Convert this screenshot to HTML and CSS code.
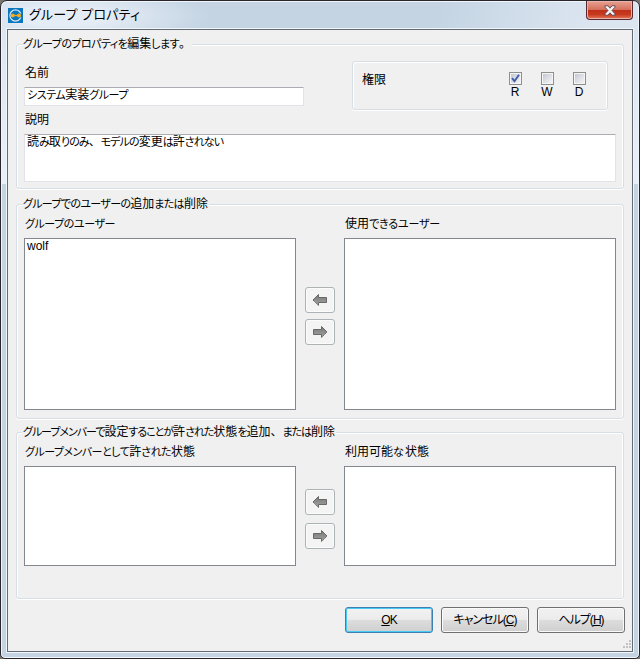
FILE: index.html
```html
<!DOCTYPE html>
<html lang="ja">
<head>
<meta charset="utf-8">
<title>グループ プロパティ</title>
<link rel="stylesheet" href="styles.css">
</head>
<body>
<svg width="0" height="0" class="defs">
  <defs>
    <linearGradient id="arrowFill" x1="0" y1="0" x2="0" y2="1"><stop offset="0" stop-color="#777"/><stop offset="1" stop-color="#a4a4a4"/></linearGradient>
    <symbol id="arrow" viewBox="0 0 16 14"><path d="M1 7 6.500 1.500v3h8v5h-8v3z" fill="url(#arrowFill)" stroke="#686868"/><path d="M1.500 8 6 12.500" stroke="#ddd" stroke-dasharray="1 1" fill="none"/></symbol>
  </defs>
</svg>
<div class="window">
  <header class="titlebar">
    <svg class="app-icon" width="15" height="15" viewBox="0 0 15 15"><rect width="15" height="15" fill="#0875bd"/><circle cx="7.500" cy="7.500" r="5.600" fill="none" stroke="#d6e8f3" stroke-width="1.200"/><rect x="9" y="5.500" width="6" height="4" fill="#0875bd"/><path d="M4 7.500h7" stroke="#f6a61c" stroke-width="1.300"/><circle cx="4.700" cy="7.500" r="1.900" fill="#f9ac18"/><circle cx="11" cy="7.500" r="2" fill="#f9ac18"/></svg>
    <span class="title">グループ プロパティ</span>
    <div class="close"><svg width="12" height="11" viewBox="0 0 12 11"><path d="M1 .8h3L6 3.200 8 .8h3v1.400L8 5.500l3 3.300v1.400H8L6 7.800l-2 2.400H1V8.800l3-3.300-3-3.300z" fill="#f4f4f4" stroke="#5b4350" stroke-width=".9"/></svg></div>
  </header>
  <main class="client">
    <section class="group props">
      <div class="legend"><span class="k">グループのプロパティを</span>編集<span class="k">します</span>。</div>
      <div class="props-top">
        <div class="name-field">
          <div class="label">名前</div>
          <div class="field"><span class="k">システム</span>実装<span class="k">グループ</span></div>
        </div>
        <div class="group rights">
          <span>権限</span>
          <div class="checks">
            <div class="check"><i class="box"><svg width="9" height="9" viewBox="0 0 9 9"><path d="M1 4.200 3.500 7.200 8 .8" fill="none" stroke="#3f5da8" stroke-width="1.900"/></svg></i>R</div>
            <div class="check"><i class="box"></i>W</div>
            <div class="check"><i class="box"></i>D</div>
          </div>
        </div>
      </div>
      <div class="label desc">説明</div>
      <div class="field area">読<span class="k">み</span>取<span class="k">りのみ</span>、<span class="k">モデルの</span>変更<span class="k">は</span>許<span class="k">されない</span></div>
    </section>

    <section class="group users">
      <div class="legend"><span class="k">グループでのユーザーの</span>追加<span class="k">または</span>削除</div>
      <div class="transfer">
        <div class="column"><div class="label loose"><span class="k">グループのユーザー</span></div><div class="list">wolf</div></div>
        <div class="arrows">
          <div class="arrow"><svg width="16" height="14"><use href="#arrow"/></svg></div>
          <div class="arrow right"><svg width="16" height="14"><use href="#arrow"/></svg></div>
        </div>
        <div class="column"><div class="label looser">使用<span class="k">できるユーザー</span></div><div class="list"></div></div>
      </div>
    </section>

    <section class="group states">
      <div class="legend"><span class="k">グループメンバーで</span>設定<span class="k">することが</span>許<span class="k">された</span>状態<span class="k">を</span>追加、<span class="k">または</span>削除</div>
      <div class="transfer">
        <div class="column"><div class="label"><span class="k">グループメンバーとして</span>許<span class="k">された</span>状態</div><div class="list"></div></div>
        <div class="arrows">
          <div class="arrow"><svg width="16" height="14"><use href="#arrow"/></svg></div>
          <div class="arrow right"><svg width="16" height="14"><use href="#arrow"/></svg></div>
        </div>
        <div class="column"><div class="label wide">利用可能<span class="k">な</span>状態</div><div class="list"></div></div>
      </div>
    </section>

    <footer class="actions">
      <div class="button default"><span><u>O</u>K</span></div>
      <div class="button"><span>キャンセル(<u>C</u>)</span></div>
      <div class="button"><span>ヘルプ(<u>H</u>)</span></div>
    </footer>
    <svg class="grip" width="10" height="10" viewBox="0 0 10 10"><path d="M7 0h2v2H7zM4 3h2v2H4zM7 3h2v2H7zM1 6h2v2H1zM4 6h2v2H4zM7 6h2v2H7z" fill="#c3c3c3"/></svg>
  </main>
</div>
</body>
</html>
```
FILE: styles.css
```css
* { box-sizing: border-box; }
body {
  margin: 0;
  width: 640px;
  height: 659px;
  overflow: hidden;
  background: #77736f;
  color: #000;
  font: 12px/16px "Liberation Sans", "Noto Sans CJK JP", sans-serif;
}
.defs { position: absolute; }

/* Kana are set narrower than kanji, as in a proportional UI face. */
.k {
  font-size: 11px;
  font-feature-settings: "palt";
  letter-spacing: var(--kana, -.6px);
}
.props .legend { --kana: -.56px; }
.name-field .field { --kana: -.45px; }
.area { --kana: -.92px; }
.users .legend { --kana: -.67px; }
.states .legend { --kana: -1.03px; }
.states .label { --kana: -.52px; }
.label.loose { --kana: -.44px; }
.label.looser { --kana: -.17px; }
.states .label.wide { --kana: 1.16px; }

.window {
  width: 640px;
  height: 659px;
  border: 1px solid #29252b;
  border-radius: 7px 7px 5px 5px;
  box-shadow: inset 0 0 0 1px #eff7fd;
  background:
    linear-gradient(#d9e4f0, #e9eff8 183px, transparent 183px) no-repeat 0 0 / 7px 100%,
    linear-gradient(#d9e4f0, #e9eff8 183px, transparent 183px) no-repeat 100% 0 / 7px 100%,
    radial-gradient(ellipse 150px 32px at 60px 15px, #e4ecf5 0 30%, transparent) no-repeat 0 0 / 100% 30px,
    linear-gradient(100deg, transparent 68%, #dbe5f0 92%) no-repeat 0 0 / 100% 30px,
    #c4d4e3;
}
.titlebar {
  display: flex;
  align-items: flex-start;
  height: 28px;
  padding-left: 7px;
}
.app-icon { margin-top: 7px; }
.title {
  margin: 6px 0 0 6px;
  font-size: 13px;
  font-feature-settings: "palt";
  letter-spacing: .15px;
}
.close {
  display: flex;
  justify-content: center;
  align-items: center;
  width: 47px;
  height: 19px;
  margin: 0 6px 0 auto;
  border: 1px solid #5a2630;
  border-top: 0;
  border-radius: 0 0 4px 4px;
  box-shadow: inset 0 0 0 1px #eab3a8;
  background: linear-gradient(#e8a192, #d4705c 48%, #bd2f18 50%, #c83a20 75%, #e27857);
}
.client {
  position: relative;
  width: 626px;
  height: 623px;
  margin-left: 6px;
  padding: 14px 8px 0;
  border: 1px solid #646a72;
  outline: 1px solid #eff7fd;
  background: #f0f0f0;
}
.group {
  border: 1px solid #d5dfe5;
  border-radius: 3px;
  box-shadow: inset 1px 1px 0 #fff, inset -1px 0 0 #fff, 0 1px 0 #fff;
}
.props { height: 145px; padding: 0 7px; }
.users { height: 215px; margin-top: 15px; padding: 0 7px; }
.states { height: 167px; margin-top: 13px; padding: 0 7px; }
.legend {
  width: max-content;
  height: 16px;
  margin: -9px 0 0 -2px;
  padding: 0 1px;
  background: #f0f0f0;
  white-space: nowrap;
}
.label { height: 16px; padding-left: 1px; white-space: nowrap; }
.props-top { display: flex; justify-content: space-between; height: 59px; }
.name-field { padding-top: 13px; }
.name-field .field { width: 280px; height: 19px; margin-top: 6px; }
.field {
  padding: 0 2px;
  border: 1px solid #e2e3ea;
  border-top-color: #abadb3;
  border-radius: 1px;
  background: #fff;
  line-height: 15px;
}
.rights {
  display: flex;
  justify-content: space-between;
  width: 256px;
  height: 49px;
  margin: 9px 8px 0 0;
  padding: 10px 21px 0 9px;
}
.checks { display: flex; gap: 18px; }
.check {
  display: flex;
  flex-direction: column;
  align-items: center;
  width: 14px;
  line-height: 14px;
}
.box {
  display: block;
  width: 13px;
  height: 13px;
  padding: 1px;
  border: 1px solid #8e8f8f;
  background: linear-gradient(135deg, #c4c9d2, #f4f4f4) content-box, #f4f4f4;
}
.box svg { display: block; }
.desc { padding-top: 1px; }
.area { height: 48px; margin-top: 7px; }
.transfer { display: flex; justify-content: space-between; }
.column { width: 272px; }
.users .label { margin-top: 4px; }
.users .list { height: 172px; margin-top: 6px; }
.states .label { margin-top: 4px; }
.states .list { height: 100px; margin-top: 6px; }
.list {
  padding: 0 2px;
  border: 1px solid #828790;
  background: #fff;
  line-height: 15px;
}
.arrows { display: flex; flex-direction: column; gap: 6px; padding-top: 75px; }
.states .arrows { gap: 8px; padding-top: 49px; }
.arrow {
  display: flex;
  align-items: center;
  justify-content: center;
  width: 30px;
  height: 26px;
  border: 1px solid #adb2b5;
  border-radius: 3px;
  box-shadow: inset 0 0 0 1px #fcfcfc;
  background: #f4f4f4;
}
.arrow.right svg { transform: scaleX(-1); }
.actions {
  display: flex;
  justify-content: flex-end;
  gap: 8px;
  margin: 8px -1px 0 0;
}
.button {
  display: flex;
  align-items: center;
  justify-content: center;
  width: 88px;
  height: 26px;
  border: 1px solid #707070;
  border-radius: 3px;
  box-shadow: inset 0 0 0 1px #fafafa;
  background: linear-gradient(#f2f2f2, #ebebeb 50%, #dddddd 50%, #cfcfcf);
  font-feature-settings: "palt";
  letter-spacing: -1px;
}
.button.default { border-color: #3c7fb1; box-shadow: inset 0 0 0 1px #48c8f4; }
.grip { position: absolute; right: 0; bottom: 1px; }
```
